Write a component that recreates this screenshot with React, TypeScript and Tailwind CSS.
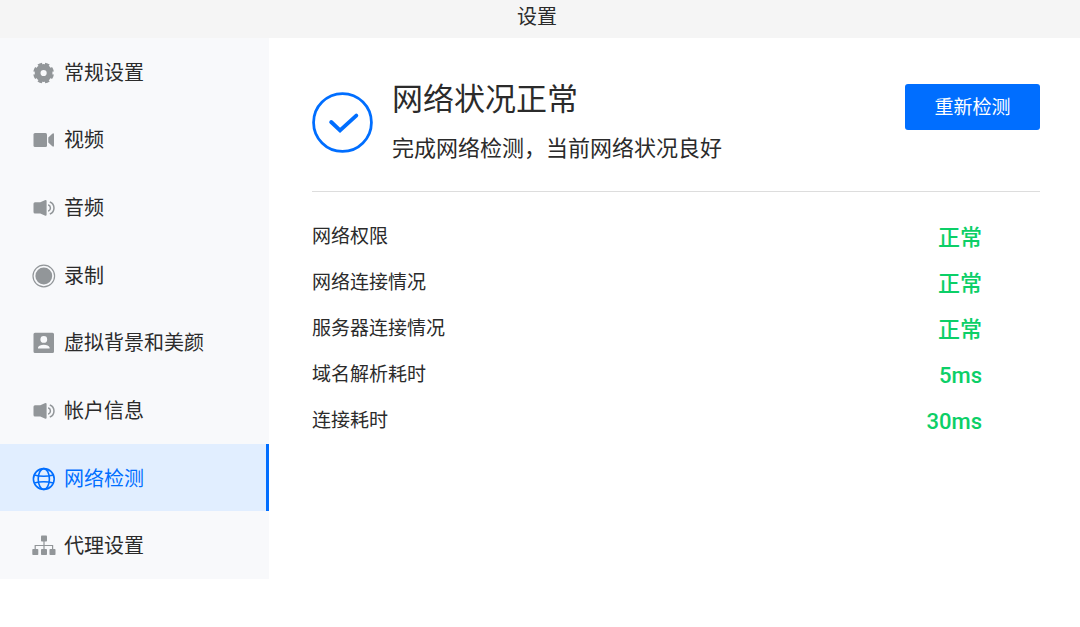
import type { ReactNode } from "react";

type MenuItem = {
  label: string;
  icon: ReactNode;
};

const SpeakerIcon = () => (
  <Icon>
    <path d="M3 6.2H8.3L12.8 4.2Q14.6 3.5 14.6 5.1V18.7Q14.6 20.3 12.8 19.6L8.3 17.6H3Q1.5 17.6 1.5 16V7.8Q1.5 6.2 3 6.2Z" />
    <path
      d="M16.2 8.8A3.4 3.4 0 0 1 16.2 15.2M17.8 6A6.4 6.4 0 0 1 17.8 18"
      fill="none"
      stroke="currentColor"
      strokeWidth="1.5"
    />
  </Icon>
);

const items: MenuItem[] = [
  {
    label: "常规设置",
    icon: (
      <Icon>
        <g fill="none" stroke="currentColor">
          <circle cx="11.6" cy="12" r="6" strokeWidth="5.8" />
          <circle
            cx="11.6"
            cy="12"
            r="9.2"
            strokeWidth="2.4"
            pathLength="80"
            strokeDasharray="6 4"
            strokeDashoffset="-2"
          />
        </g>
      </Icon>
    ),
  },
  {
    label: "视频",
    icon: (
      <Icon>
        <rect x="1.5" y="5" width="13.5" height="14" rx="1.5" />
        <path d="M16.3 9.5L20.3 5.8Q22 4.6 22 6.5V17.5Q22 19.4 20.3 18.2L16.3 14.5Z" />
      </Icon>
    ),
  },
  { label: "音频", icon: <SpeakerIcon /> },
  {
    label: "录制",
    icon: (
      <Icon>
        <circle cx="11.8" cy="12" r="8.4" />
        <circle
          cx="11.8"
          cy="12"
          r="10.8"
          fill="none"
          stroke="currentColor"
          strokeWidth="1.2"
        />
      </Icon>
    ),
  },
  {
    label: "虚拟背景和美颜",
    icon: (
      <Icon>
        <path
          fillRule="evenodd"
          d="M3 1.7H20.5Q22 1.7 22 3.2V20.5Q22 22 20.5 22H3Q1.5 22 1.5 20.5V3.2Q1.5 1.7 3 1.7ZM11.8 5A3.4 3.4 0 1 0 11.8 11.8A3.4 3.4 0 1 0 11.8 5ZM6 17.5H17.6V16.5Q16.5 13.7 11.8 13.7T6 16.5Z"
        />
      </Icon>
    ),
  },
  { label: "帐户信息", icon: <SpeakerIcon /> },
  {
    label: "网络检测",
    icon: (
      <Icon>
        <g fill="none" stroke="currentColor" strokeWidth="1.6">
          <circle cx="11.8" cy="12" r="10.4" />
          <ellipse cx="11.8" cy="12" rx="5.6" ry="10.4" />
          <path d="M2.2 8Q11.8 10.4 21.4 8M2.2 16Q11.8 13.6 21.4 16" />
        </g>
      </Icon>
    ),
  },
  {
    label: "代理设置",
    icon: (
      <Icon>
        <rect x="9" y="1.5" width="6" height="6" rx="0.8" />
        <rect x="0.3" y="15" width="6" height="6" rx="0.8" />
        <rect x="9" y="15" width="6" height="6" rx="0.8" />
        <rect x="17.5" y="15" width="6" height="6" rx="0.8" />
        <path
          d="M12 7V15M3.2 15V11.5H20.6V15"
          fill="none"
          stroke="currentColor"
          strokeWidth="1.2"
        />
      </Icon>
    ),
  },
];

const results = [
  { label: "网络权限", value: "正常" },
  { label: "网络连接情况", value: "正常" },
  { label: "服务器连接情况", value: "正常" },
  { label: "域名解析耗时", value: "5ms" },
  { label: "连接耗时", value: "30ms" },
];

export default function App() {
  return (
    <div className="min-h-screen bg-white font-['Roboto','Noto_Sans_CJK_SC',sans-serif] text-[#2b2b2b]">
      <header className="bg-[#f5f5f5] pt-0.5 pr-1.5 pb-1.5">
        <h1 className="text-center text-xl leading-[30px]">设置</h1>
      </header>
      <div className="flex items-start">
        <Sidebar active="网络检测" />
        <main className="min-w-0 flex-1 pt-11 pr-10 pl-[43px]">
          <Summary />
          <Results />
        </main>
      </div>
    </div>
  );
}

function Icon({ children }: { children: ReactNode }) {
  return (
    <svg
      viewBox="0 0 24 24"
      className="size-6 shrink-0"
      fill="currentColor"
      aria-hidden="true"
    >
      {children}
    </svg>
  );
}

const Sidebar = ({ active }: { active: string }) => {
  return (
    <nav className="grid min-h-[541px] w-[269px] shrink-0 auto-rows-fr bg-[#f8f9fb]">
      {items.map((item) => {
        const selected = item.label === active;
        return (
          <button
            key={item.label}
            type="button"
            aria-current={selected ? "page" : undefined}
            className={`flex items-center gap-2 border-r-3 pt-0.5 pl-8 text-xl ${
              selected
                ? "border-[#006eff] bg-[#e1eeff] text-[#006eff]"
                : "border-transparent"
            }`}
          >
            <span className={selected ? "" : "text-[#929699]"}>
              {item.icon}
            </span>
            {item.label}
          </button>
        );
      })}
    </nav>
  );
};

const Summary = () => {
  return (
    <section className="flex items-start border-b border-[#dddddd] pb-[26px]">
      <svg
        viewBox="0 0 62 62"
        className="mt-2.5 size-[61px] shrink-0"
        fill="none"
        stroke="#006eff"
        aria-hidden="true"
      >
        <circle cx="31" cy="31" r="29.4" strokeWidth="2.8" />
        <path
          d="M19.5 30.5L28.5 39L45 24"
          strokeWidth="4"
          strokeLinecap="round"
        />
      </svg>
      <div className="ml-[19px] flex-1">
        <h2 className="text-[31px] leading-9">网络状况正常</h2>
        <p className="mt-[15px] text-[22px] leading-8">
          完成网络检测，当前网络状况良好
        </p>
      </div>
      <button
        type="button"
        className="mt-0.5 h-[46px] w-[135px] shrink-0 rounded-[3px] bg-[#006eff] pt-0.5 text-[19px] text-white"
      >
        重新检测
      </button>
    </section>
  );
};

const Results = () => {
  return (
    <dl className="mt-[22px] pr-[58px]">
      {results.map((result) => (
        <div
          key={result.label}
          className="flex h-[46px] items-center justify-between"
        >
          <dt className="text-[19px]">{result.label}</dt>
          <dd className="text-[22px] font-medium text-[#0ccf67]">
            {result.value}
          </dd>
        </div>
      ))}
    </dl>
  );
};
